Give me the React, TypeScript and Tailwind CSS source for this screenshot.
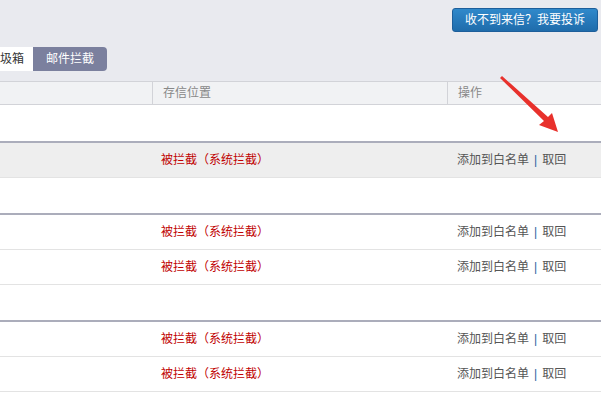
import React from "react";

const font = { fontFamily: '"Liberation Sans", "Noto Sans CJK SC", sans-serif' };

type Group = { rows: number };

const groups: Group[] = [{ rows: 1 }, { rows: 2 }, { rows: 2 }];

function DataRow({ hover }: { hover?: boolean }) {
  return (
    <div
      className={`flex h-[35px] items-center border-b border-[#e3e3e3] text-[12px] ${
        hover ? "bg-[#eeeeee]" : "bg-white"
      }`}
    >
      <div className="w-[161px] shrink-0" />
      <div className="w-[296px] shrink-0 text-[#c00000]">被拦截（系统拦截）</div>
      <div className="flex items-center text-[#555]">
        <span>添加到白名单</span>
        <span className="mx-[5px] text-[#1f5f9f]">|</span>
        <span>取回</span>
      </div>
    </div>
  );
}

export default function App() {
  return (
    <div className="relative h-[397px] w-[601px] overflow-hidden bg-white" style={font}>
      {/* toolbar */}
      <div className="h-[81px] bg-[#e9eaef] pt-[8px]">
        <div className="flex justify-end pr-[3px]">
          <button className="h-[24px] w-[146px] rounded-[3px] border border-[#1d5f9b] bg-gradient-to-b from-[#3089cb] to-[#1f6cab] text-[12px] text-white">
            收不到来信？我要投诉
          </button>
        </div>
        <div className="ml-[-24px] mt-[15px] flex h-[24px] text-[12px]">
          <div className="flex items-center bg-white pl-[12px] pr-[9px] text-[#333]">垃圾箱</div>
          <div className="flex items-center rounded-r-[4px] bg-[#7b809e] px-[13px] text-white">邮件拦截</div>
        </div>
      </div>

      {/* table header */}
      <div className="flex h-[24px] items-center border-y border-[#d2d3d8] bg-[#f1f2f4] text-[12px] text-[#888]">
        <div className="h-full w-[153px] shrink-0 border-r border-[#d2d3d8]" />
        <div className="flex h-full w-[295px] shrink-0 items-center border-r border-[#d2d3d8] pl-[10px]">存信位置</div>
        <div className="pl-[10px]">操作</div>
      </div>

      {/* groups */}
      {groups.map((g, gi) => (
        <div key={gi}>
          <div className={`${gi === 0 ? "h-[38px]" : "h-[37px]"} border-b-2 border-[#abadbb] bg-white`} />
          {Array.from({ length: g.rows }).map((_, ri) => (
            <DataRow key={ri} hover={gi === 0} />
          ))}
        </div>
      ))}

      {/* red arrow annotation */}
      <svg className="pointer-events-none absolute left-0 top-0" width="601" height="397">
        <polygon points="500,78 502,76 548,117 552,113 558,132 539,125 544,121" fill="#e8312c" />
      </svg>
    </div>
  );
}
